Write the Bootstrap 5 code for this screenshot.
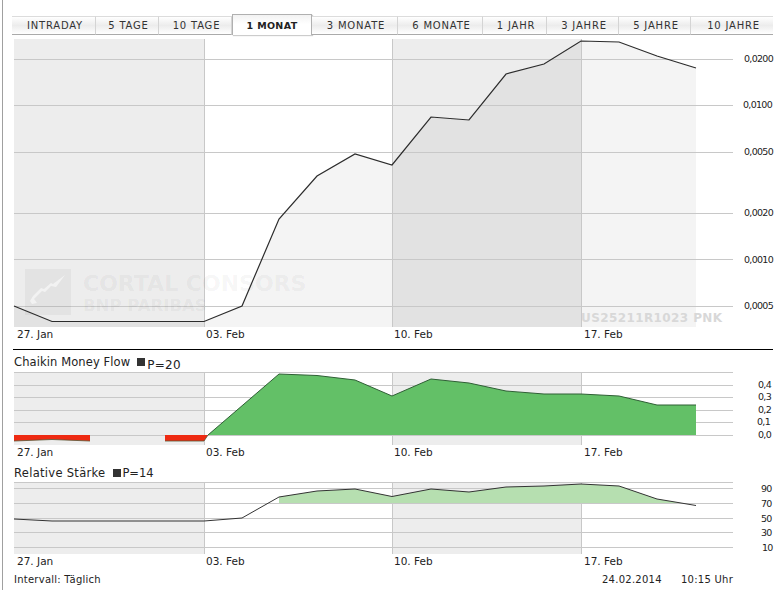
<!DOCTYPE html>
<html lang="de"><head><meta charset="utf-8"><title>Chart</title>
<link rel="stylesheet" href="https://cdn.jsdelivr.net/npm/bootstrap@5.3.0/dist/css/bootstrap.min.css">
<style>
html,body{background:#fff;margin:0;overflow:hidden}
body{font-family:"DejaVu Sans",Verdana,sans-serif;color:#222}
.frame{width:782px;height:591px}
.rail{width:3px;height:590px;border-right:1px solid #a0a0a0;flex:none}
.inner{width:779px;padding-top:14px}
.tabbar{margin-left:9px;width:761px;height:21px;flex-wrap:nowrap;border:0}
.tabbar .nav-link{margin-top:2px;height:19px;padding:1px 0 0 3px;text-align:center;font-size:10px;letter-spacing:.8px;color:#333;border:0;border-top:1px solid #dcdcdc;border-right:1px solid #d4d4d4;border-bottom:1px solid #aaa;border-radius:0;background:linear-gradient(#fff,#ececec 50%,#fff);line-height:15px}
.tabbar .nav-link.active{margin-top:0;height:21px;padding:3px 0 0;font-size:9.5px;letter-spacing:.35px;font-weight:700;color:#222;background:linear-gradient(#f2f2f2,#fff 45%);border:1px solid #b0b0b0;border-bottom:0;box-shadow:1px 1px 1px #ccc}
.plot{display:block}
.plot text{font-family:"DejaVu Sans",Verdana,sans-serif}
.dt{font-size:10.5px;fill:#222}
.val{font-size:9.5px;letter-spacing:-.7px;fill:#222}
.wm1{font-size:22px;font-weight:700;fill:#000;fill-opacity:.055}
.wm2{font-size:16.5px;font-weight:700;fill:#000;fill-opacity:.055}
.wm3{font-size:12px;font-weight:700;fill:#d8d8d8;letter-spacing:.4px}
.rule{height:1px;background:#000;margin:1px 9px 0 10px}
.ttl{margin-left:11px;font-size:11.5px;letter-spacing:.1px;color:#222;line-height:15px}
.ttl1{height:16px;margin-top:5px;margin-bottom:0}
.ttl2{height:15px;margin-top:5px;letter-spacing:.3px}
.swatch{display:inline-block;width:8px;height:8px;background:#333;margin:0 2px 0 7px}
.ttl2 .swatch{margin:0 1px 0 4px}
.drop{display:inline-block;font-size:12px;letter-spacing:.3px;vertical-align:-3px}
.drop0{font-size:11.5px;letter-spacing:0}
.foot{font-size:10px;letter-spacing:.25px;margin:2px 0 0 11px;width:719px;line-height:14px}
.stamp{width:131px}
.t1{width:84px}.t2{width:63px}.t3{width:73px}.t4{width:80px}.t5{width:86px}.t6{width:85px}.t7{width:64px}.t8{width:72px}.t9{width:72px}.t10{width:82px;border-right:0!important}
</style></head><body>
<div class="frame d-flex">
<div class="rail"></div>
<div class="inner">
<nav class="nav tabbar d-flex">
<a class="nav-link t1" href="#">INTRADAY</a>
<a class="nav-link t2" href="#">5 TAGE</a>
<a class="nav-link t3" href="#">10 TAGE</a>
<a class="nav-link active t4" href="#">1 MONAT</a>
<a class="nav-link t5" href="#">3 MONATE</a>
<a class="nav-link t6" href="#">6 MONATE</a>
<a class="nav-link t7" href="#">1 JAHR</a>
<a class="nav-link t8" href="#">3 JAHRE</a>
<a class="nav-link t9" href="#">5 JAHRE</a>
<a class="nav-link t10" href="#">10 JAHRE</a>
</nav>
<svg class="plot mt-1" width="779" height="309" viewBox="3 39 779 309">
<rect x="14" y="39" width="190" height="288" fill="#ededed"/>
<rect x="392" y="39" width="189" height="288" fill="#ededed"/>
<path d="M14 306L52 321.5L204 321.5L242 306L279 219L317 176L355 154L392 165L431 117L469 120L506 74L544 64L581 41L619 42L657 56L696 68V327H14Z" fill="#000" fill-opacity=".045"/>
<path d="M14 59.500H733M14 105.500H733M14 152.500H733M14 213.500H733M14 259.500H733M14 306.500H733M204.500 39V327M392.500 39V327M581.500 39V327" stroke="#c8c8c8" fill="none"/>
<rect x="25" y="269" width="46" height="46" fill="#000" fill-opacity=".04"/>
<path d="M33 296l8-8 3 1 7-6 2 1 12-9-9 12-5-1-6 6-3-1-8 8 3 4-5 1-2-3z" fill="#fff" fill-opacity=".55"/>
<text class="wm1" x="83" y="291">CORTAL CONSORS</text>
<text class="wm2" x="83" y="311">BNP PARIBAS</text>
<text class="wm3" x="581" y="322">US25211R1023 PNK</text>
<path d="M14 306L52 321.5L204 321.5L242 306L279 219L317 176L355 154L392 165L431 117L469 120L506 74L544 64L581 41L619 42L657 56L696 68" fill="none" stroke="#2c2c2c" stroke-width="1.200"/>
<text class="dt" x="17" y="338">27. Jan</text><text class="dt" x="206" y="338">03. Feb</text><text class="dt" x="394" y="338">10. Feb</text><text class="dt" x="584" y="338">17. Feb</text>
<text class="val" x="744" y="62">0,0200</text><text class="val" x="743" y="108">0,0100</text><text class="val" x="744" y="155">0,0050</text><text class="val" x="744" y="216">0,0020</text><text class="val" x="744" y="263">0,0010</text><text class="val" x="744" y="309">0,0005</text>
</svg>
<div class="rule"></div>
<div class="ttl ttl1">Chaikin Money Flow<span class="swatch"></span><span class="drop">P=20</span></div>
<svg class="plot" width="779" height="90" viewBox="3 371 779 90">
<rect x="14" y="372" width="190" height="73" fill="#ededed"/>
<rect x="392" y="372" width="189" height="73" fill="#ededed"/>
<path d="M14 372.500H733M14 385.500H733M14 397.500H733M14 410.500H733M14 422.500H733M14 435.500H733M204.500 372V445M392.500 372V445M581.500 372V445" stroke="#c8c8c8" fill="none"/>
<path d="M208 435L279 374L317 375.500L355 380L392 396L431 379L469 383L506 391L544 394L581 394L619 396L657 405L696 405V435Z" fill="#63c067"/>
<path d="M208 435L279 374L317 375.500L355 380L392 396L431 379L469 383L506 391L544 394L581 394L619 396L657 405L696 405" fill="none" stroke="#2f5f35" stroke-width="1"/>
<path d="M14 435H90V441L52 439.500L14 441ZM165 435H208L204 441H165Z" fill="#ee2a12"/>
<path d="M14 441L52 439.500L90 441M165 441H204L208 435" fill="none" stroke="#553" stroke-width=".8"/>
<text class="dt" x="17" y="456">27. Jan</text><text class="dt" x="206" y="456">03. Feb</text><text class="dt" x="394" y="456">10. Feb</text><text class="dt" x="584" y="456">17. Feb</text>
<text class="val" x="758" y="388">0,4</text><text class="val" x="758" y="400">0,3</text><text class="val" x="758" y="413">0,2</text><text class="val" x="757" y="425">0,1</text><text class="val" x="758" y="438">0,0</text>
</svg>
<div class="ttl ttl2">Relative Stärke <span class="swatch"></span><span class="drop0">P=14</span></div>
<svg class="plot" width="779" height="90" viewBox="3 481 779 90">
<rect x="14" y="482" width="190" height="72" fill="#ededed"/>
<rect x="392" y="482" width="189" height="72" fill="#ededed"/>
<path d="M14 482.500H733M14 488.500H733M14 503.500H733M14 518.500H733M14 532.500H733M14 547.500H733M204.500 482V554M392.500 482V554M581.500 482V554" stroke="#c8c8c8" fill="none"/>
<path d="M279 497L317 491L355 489L392 496.500L431 489L469 492L506 487L544 486L581 484L619 486L657 499L681 503H279Z" fill="#b6dfb0"/>
<path d="M14 519L52 521L204 521L242 518L279 497L317 491L355 489L392 496.500L431 489L469 492L506 487L544 486L581 484L619 486L657 499L696 505.500" fill="none" stroke="#333" stroke-width="1"/>
<text class="dt" x="17" y="565">27. Jan</text><text class="dt" x="206" y="565">03. Feb</text><text class="dt" x="394" y="565">10. Feb</text><text class="dt" x="584" y="565">17. Feb</text>
<text class="val" x="761" y="492">90</text><text class="val" x="761" y="507">70</text><text class="val" x="761" y="522">50</text><text class="val" x="761" y="536">30</text><text class="val" x="762" y="551">10</text>
</svg>
<div class="foot d-flex justify-content-between"><span>Intervall: Täglich</span><span class="stamp d-flex justify-content-between"><span>24.02.2014</span><span>10:15 Uhr</span></span></div>
</div>
</div>
</body></html>
